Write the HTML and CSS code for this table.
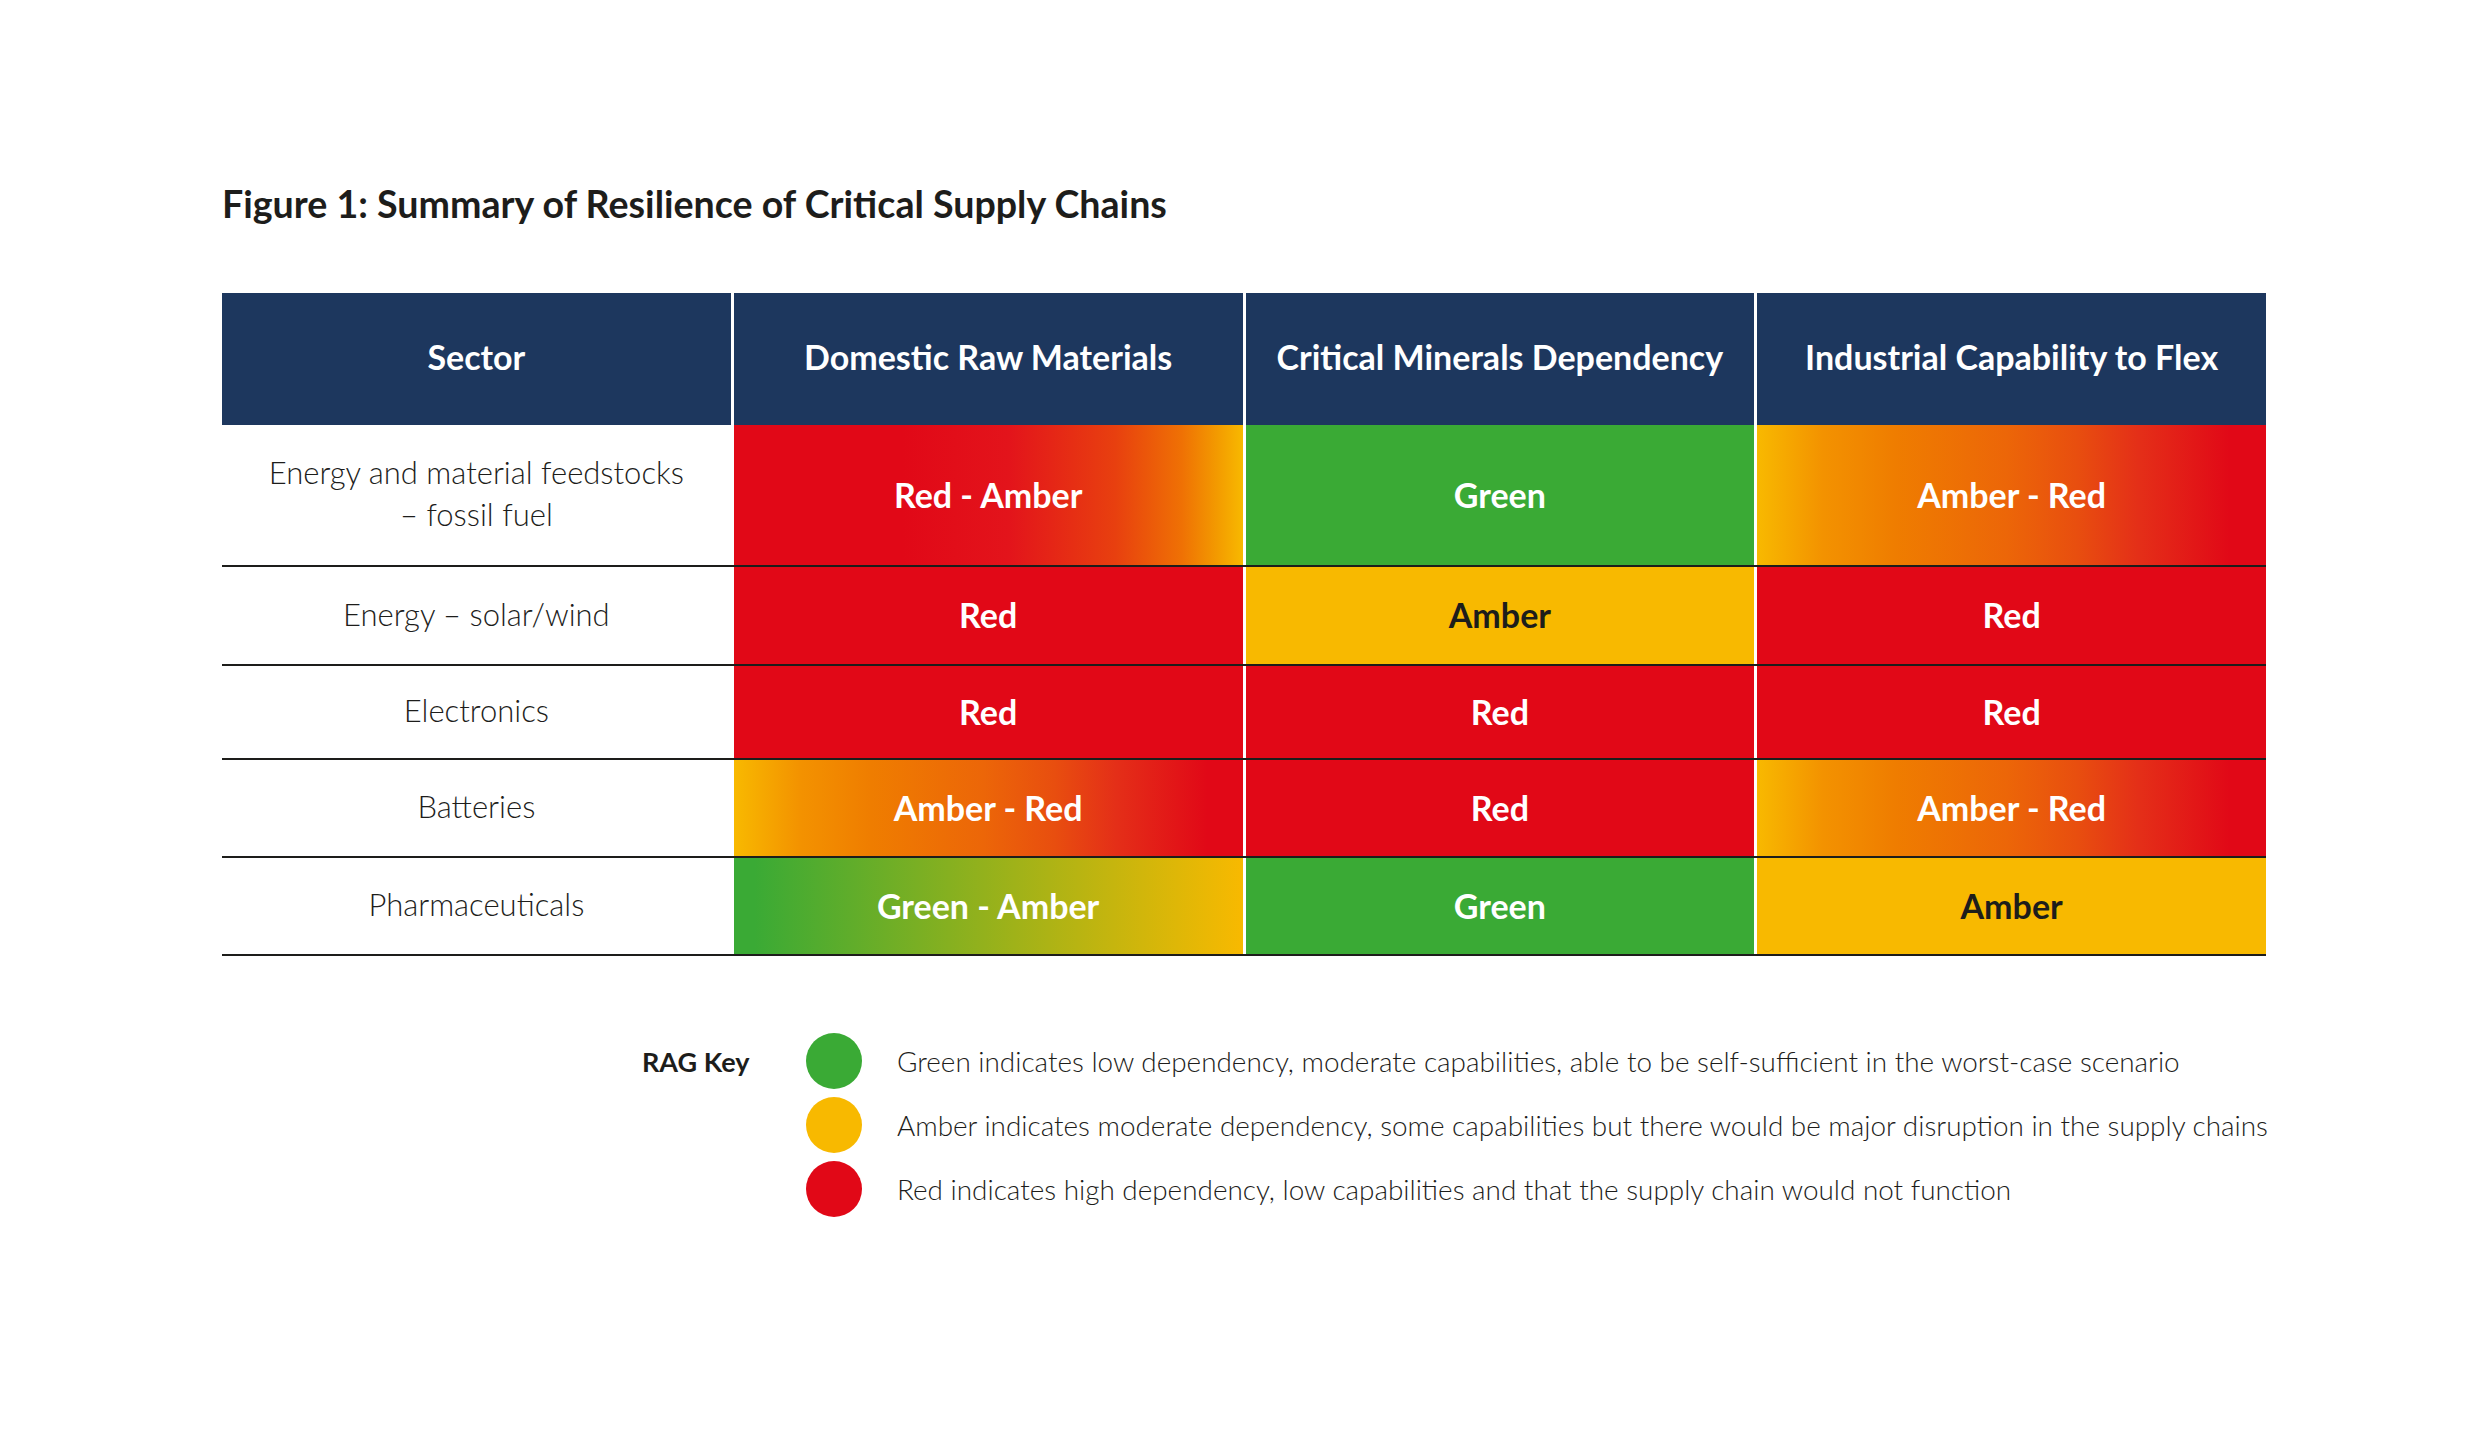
FILE: index.html
```html
<!DOCTYPE html>
<html lang="en">
<head>
<meta charset="utf-8">
<title>Figure 1: Summary of Resilience of Critical Supply Chains</title>
<link rel="stylesheet" href="styles.css">
</head>
<body>
<main class="page">
  <h1 class="title">Figure 1: Summary of Resilience of Critical Supply Chains</h1>

  <div class="rag-table">
    <div class="row head">
      <div class="cell">Sector</div>
      <div class="cell">Domestic Raw Materials</div>
      <div class="cell">Critical Minerals Dependency</div>
      <div class="cell">Industrial Capability to Flex</div>
    </div>
    <div class="row r1">
      <div class="cell sector">Energy and material feedstocks<br>– fossil fuel</div>
      <div class="cell red-amber">Red - Amber</div>
      <div class="cell green">Green</div>
      <div class="cell amber-red">Amber - Red</div>
    </div>
    <div class="row r2">
      <div class="cell sector">Energy – solar/wind</div>
      <div class="cell red">Red</div>
      <div class="cell amber">Amber</div>
      <div class="cell red">Red</div>
    </div>
    <div class="row r3">
      <div class="cell sector">Electronics</div>
      <div class="cell red">Red</div>
      <div class="cell red">Red</div>
      <div class="cell red">Red</div>
    </div>
    <div class="row r4">
      <div class="cell sector">Batteries</div>
      <div class="cell amber-red">Amber - Red</div>
      <div class="cell red">Red</div>
      <div class="cell amber-red">Amber - Red</div>
    </div>
    <div class="row r5">
      <div class="cell sector">Pharmaceuticals</div>
      <div class="cell green-amber">Green - Amber</div>
      <div class="cell green">Green</div>
      <div class="cell amber">Amber</div>
    </div>
  </div>

  <div class="key">
    <div class="key-label">RAG Key</div>
    <ul class="key-list">
      <li class="key-item"><span class="dot dot-green"></span><span>Green indicates low dependency, moderate capabilities, able to be self-sufficient in the worst-case scenario</span></li>
      <li class="key-item"><span class="dot dot-amber"></span><span>Amber indicates moderate dependency, some capabilities but there would be major disruption in the supply chains</span></li>
      <li class="key-item"><span class="dot dot-red"></span><span>Red indicates high dependency, low capabilities and that the supply chain would not function</span></li>
    </ul>
  </div>
</main>
</body>
</html>
```

FILE: styles.css
```css
* {
  box-sizing: border-box;
}

body {
  margin: 0;
  background: #ffffff;
  color: #1d1d1b;
  font-family: Lato, "Noto Sans", sans-serif;
}

.page {
  padding: 181px 0 0 222px;
}

.title {
  margin: 0;
  font-size: 37.6px;
  line-height: 46px;
  font-weight: 700;
  color: #1d1d1b;
}

.rag-table {
  margin-top: 66px;
  width: 2044px;
}

.row {
  display: grid;
  grid-template-columns: repeat(4, 1fr);
  column-gap: 3px;
  border-bottom: 2px solid #1d1d1b;
}

.row.head {
  height: 132px;
  border-bottom: 0;
}

.r1 { height: 142px; }
.r2 { height: 99px; }
.r3 { height: 94px; }
.r4 { height: 98px; }
.r5 { height: 98px; }

.cell {
  display: flex;
  align-items: center;
  justify-content: center;
  text-align: center;
  font-size: 34px;
  font-weight: 700;
  color: #ffffff;
  padding-bottom: 2px;
}

.head .cell {
  background: #1d375e;
  padding-bottom: 6px;
}

.cell.sector {
  font-size: 31px;
  line-height: 42px;
  font-weight: 300;
  color: #1d1d1b;
  padding-bottom: 4px;
}

.red { background: #e10817; }
.green { background: #3aaa35; }
.amber { background: #f8b900; color: #1d1d1b; }

.red-amber {
  background: linear-gradient(to right,
    #e10817 0%, #e10817 33%, #e3141b 54%, #e8400f 75%,
    #ef7104 88%, #f39b00 95%, #f8b900 100%);
}

.amber-red {
  background: linear-gradient(to right,
    #f8b900 0%, #f39200 13%, #ef7d00 27%, #ec6608 49%,
    #e84e0f 63%, #e42f18 75%, #e10817 93%, #e10817 100%);
}

.green-amber {
  background: linear-gradient(to right,
    #3aaa35 0%, #3aaa35 4%, #f8b900 100%);
}

.key {
  display: flex;
  margin-top: 77px;
  margin-left: 420px;
}

.key-label {
  width: 164px;
  height: 56px;
  display: flex;
  align-items: center;
  font-size: 27px;
  font-weight: 700;
}

.key-list {
  list-style: none;
  margin: 0;
  padding: 0;
  display: flex;
  flex-direction: column;
  gap: 8px;
}

.key-item {
  display: flex;
  align-items: center;
  gap: 35px;
  height: 56px;
  font-size: 27.9px;
  font-weight: 300;
  color: #1d1d1b;
  white-space: nowrap;
}

.dot {
  flex: none;
  width: 56px;
  height: 56px;
  border-radius: 50%;
}

.dot-green { background: #3aaa35; }
.dot-amber { background: #f8b900; }
.dot-red { background: #e10817; }
```
